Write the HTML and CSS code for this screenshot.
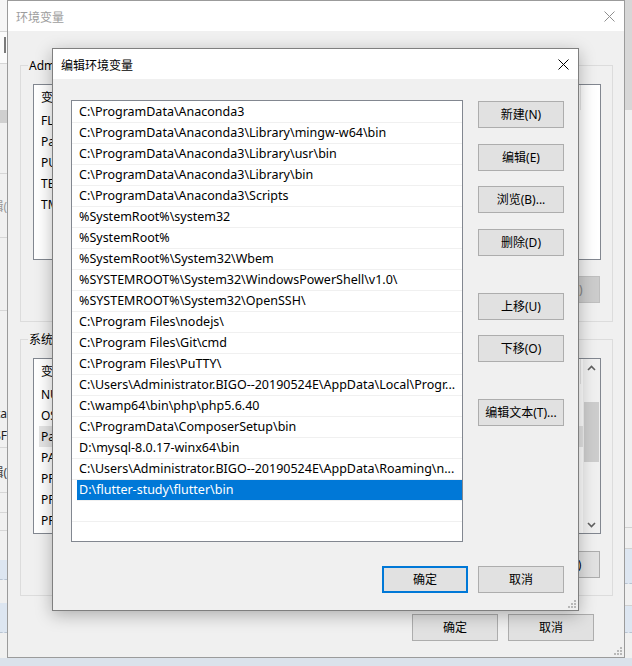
FILE: index.html
```html
<!DOCTYPE html>
<html lang="zh-CN">
<head>
<meta charset="utf-8">
<title>编辑环境变量</title>
<link rel="stylesheet" href="styles.css">
</head>
<body>
<div class="desktop">
  <div class="backapp">
    <div class="edge edge-left">
      <div class="bl la"></div>
      <div class="bl lb"><span class="caret"></span></div>
      <div class="bl lc"></div>
      <div class="bl ld"></div>
      <div class="bl le"></div>
      <div class="bl lt lf"><span>编辑(</span></div>
      <div class="bl lg"></div>
      <div class="bl lt lh"><span>Data</span></div>
      <div class="bl lt li"><span>GSF</span></div>
      <div class="bl lt lj"><span>编辑(</span></div>
      <div class="bl lk"></div>
      <div class="bl ll"></div>
      <div class="bl lm"></div>
      <div class="bl lsel"></div>
      <div class="bl ln"></div>
      <div class="bl lsel lsel2"></div>
      <div class="bl lrest"></div>
    </div>
    <div class="backapp-mid"></div>
    <div class="edge edge-right">
      <div class="bl ra"></div>
      <div class="bl rb"></div>
      <div class="bl rc"></div>
      <div class="bl rsel"></div>
      <div class="bl rd"></div>
      <div class="bl rsel rsel2"></div>
      <div class="bl lrest"></div>
    </div>
    <div class="edge-bottom"></div>
  </div>

  <section class="win envwin">
    <header class="titlebar">
      <span class="title title-inactive">环境变量</span>
      <svg class="xbtn" width="11" height="11" viewBox="0 0 11 11"><path d="M0.5 0.5L10.5 10.5M10.5 0.5L0.5 10.5" stroke="#8f8f8f" stroke-width="1" fill="none"/></svg>
    </header>
    <div class="winbody">
      <div class="group">
        <span class="group-label">Administrator 的用户变量(U)</span>
        <div class="lv">
          <div class="lv-main">
            <div class="lv-head"><span class="col1">变量</span><span class="col2">值</span></div>
            <div class="lv-row"><span class="col1">FLUTTER_STORAGE_BASE_URL</span></div>
            <div class="lv-row"><span class="col1">Path</span></div>
            <div class="lv-row"><span class="col1">PUB_HOSTED_URL</span></div>
            <div class="lv-row"><span class="col1">TEMP</span></div>
            <div class="lv-row"><span class="col1">TMP</span></div>
          </div>
        </div>
        <div class="btnrow">
          <button class="btn">新建(N)...</button>
          <button class="btn" disabled>编辑(E)...</button>
          <button class="btn" disabled>删除(D)</button>
        </div>
      </div>

      <div class="group group-sys">
        <span class="group-label">系统变量(S)</span>
        <div class="lv">
          <div class="lv-main">
            <div class="lv-head"><span class="col1">变量</span><span class="col2">值</span></div>
            <div class="lv-row"><span class="col1">NUMBER_OF_PROCESSORS</span></div>
            <div class="lv-row"><span class="col1">OS</span></div>
            <div class="lv-row lv-row-sel"><span class="col1">Path</span></div>
            <div class="lv-row"><span class="col1">PATHEXT</span></div>
            <div class="lv-row"><span class="col1">PROCESSOR_ARCHITECTURE</span></div>
            <div class="lv-row"><span class="col1">PROCESSOR_IDENTIFIER</span></div>
            <div class="lv-row"><span class="col1">PROCESSOR_LEVEL</span></div>
          </div>
          <div class="vscroll">
            <div class="sb-btn"><svg width="9" height="6" viewBox="0 0 9 6"><path d="M1 5L4.5 1.5L8 5" stroke="#606060" stroke-width="1.6" fill="none"/></svg></div>
            <div class="sb-track"><div class="sb-thumb"></div></div>
            <div class="sb-btn"><svg width="9" height="6" viewBox="0 0 9 6"><path d="M1 1L4.5 4.5L8 1" stroke="#606060" stroke-width="1.6" fill="none"/></svg></div>
          </div>
        </div>
        <div class="btnrow">
          <button class="btn">新建(W)...</button>
          <button class="btn">编辑(I)...</button>
          <button class="btn">删除(L)</button>
        </div>
      </div>

      <div class="btnrow mainrow">
        <button class="btn">确定</button>
        <button class="btn">取消</button>
      </div>
    </div>
    <svg class="grip" width="8" height="8" viewBox="0 0 8 8"><g fill="#b8b8b8"><rect x="6" y="0" width="2" height="2"/><rect x="3" y="3" width="2" height="2"/><rect x="6" y="3" width="2" height="2"/><rect x="0" y="6" width="2" height="2"/><rect x="3" y="6" width="2" height="2"/><rect x="6" y="6" width="2" height="2"/></g></svg>
  </section>

  <section class="win dialog">
    <header class="titlebar">
      <span class="title">编辑环境变量</span>
      <svg class="xbtn" width="11" height="11" viewBox="0 0 11 11"><path d="M0.5 0.5L10.5 10.5M10.5 0.5L0.5 10.5" stroke="#000" stroke-width="1" fill="none"/></svg>
    </header>
    <div class="dlgbody">
      <div class="dlg-main">
        <div class="pathlist">
          <div class="pl-row">C:\ProgramData\Anaconda3</div>
          <div class="pl-row">C:\ProgramData\Anaconda3\Library\mingw-w64\bin</div>
          <div class="pl-row">C:\ProgramData\Anaconda3\Library\usr\bin</div>
          <div class="pl-row">C:\ProgramData\Anaconda3\Library\bin</div>
          <div class="pl-row">C:\ProgramData\Anaconda3\Scripts</div>
          <div class="pl-row">%SystemRoot%\system32</div>
          <div class="pl-row">%SystemRoot%</div>
          <div class="pl-row">%SystemRoot%\System32\Wbem</div>
          <div class="pl-row">%SYSTEMROOT%\System32\WindowsPowerShell\v1.0\</div>
          <div class="pl-row">%SYSTEMROOT%\System32\OpenSSH\</div>
          <div class="pl-row">C:\Program Files\nodejs\</div>
          <div class="pl-row">C:\Program Files\Git\cmd</div>
          <div class="pl-row">C:\Program Files\PuTTY\</div>
          <div class="pl-row">C:\Users\Administrator.BIGO--20190524E\AppData\Local\Progr...</div>
          <div class="pl-row">C:\wamp64\bin\php\php5.6.40</div>
          <div class="pl-row">C:\ProgramData\ComposerSetup\bin</div>
          <div class="pl-row">D:\mysql-8.0.17-winx64\bin</div>
          <div class="pl-row">C:\Users\Administrator.BIGO--20190524E\AppData\Roaming\n...</div>
          <div class="pl-row pl-sel">D:\flutter-study\flutter\bin</div>
          <div class="pl-row"></div>
          <div class="pl-row"></div>
        </div>
        <div class="btncol">
          <button class="btn">新建(N)</button>
          <button class="btn mt16">编辑(E)</button>
          <button class="btn mt15">浏览(B)...</button>
          <button class="btn mt16">删除(D)</button>
          <button class="btn mt37">上移(U)</button>
          <button class="btn mt15">下移(O)</button>
          <button class="btn mt37">编辑文本(T)...</button>
        </div>
      </div>
      <div class="dlg-foot">
        <button class="btn btn-default">确定</button>
        <button class="btn">取消</button>
      </div>
    </div>
    <svg class="grip" width="8" height="8" viewBox="0 0 8 8"><g fill="#b8b8b8"><rect x="6" y="0" width="2" height="2"/><rect x="3" y="3" width="2" height="2"/><rect x="6" y="3" width="2" height="2"/><rect x="0" y="6" width="2" height="2"/><rect x="3" y="6" width="2" height="2"/><rect x="6" y="6" width="2" height="2"/></g></svg>
  </section>
</div>
</body>
</html>
```

FILE: styles.css
```css
* { box-sizing: border-box; }
html, body { margin: 0; padding: 0; }
body {
  width: 632px;
  height: 666px;
  overflow: hidden;
  background: #f0f0f0;
  font-family: "Noto Sans", "Noto Sans CJK SC", sans-serif;
  font-size: 12px;
  color: #000;
}
.desktop {
  position: relative;
  width: 632px;
  height: 666px;
  overflow: hidden;
}

/* ---------- window behind everything ---------- */
.backapp {
  display: grid;
  grid-template-columns: 7px 618px 7px;
  grid-template-rows: 658px 8px;
  width: 632px;
  height: 666px;
  background: #f0f0f0;
}
.edge { display: flex; flex-direction: column; overflow: hidden; }
.edge-bottom { grid-column: 1 / 4; background: #dbe2eb; }
.bl { flex: none; }
.lt { display: flex; justify-content: flex-end; overflow: hidden; white-space: nowrap; color: #6d6d6d; font-size: 12px; }
.la { height: 32px; background: #f6f6f6; border-bottom: 1px solid #d6d6d6; }
.lb { height: 32px; background: #fbfbfb; border-bottom: 1px solid #d6d6d6; padding: 5px 0 0 4px; }
.caret { display: block; width: 2px; height: 16px; background: #7a7a7a; }
.lc { height: 46px; }
.ld { height: 13px; background: #cfcfcf; }
.le { height: 51px; border-bottom: 1px solid #d6d6d6; }
.lf { height: 64px; padding-top: 24px; line-height: 17px; border-bottom: 1px solid #d6d6d6; color: #9a9a9a; }
.lg { height: 73px; border-bottom: 1px solid #d6d6d6; }
.lh { height: 113px; padding-top: 94px; line-height: 17px; color: #222; }
.li { height: 24px; line-height: 23px; border-bottom: 1px solid #d6d6d6; color: #222; }
.lj { height: 45px; padding-top: 16px; line-height: 17px; border-bottom: 1px solid #d6d6d6; color: #444; }
.lk { height: 20px; border-bottom: 1px solid #d6d6d6; }
.ll { height: 18px; border-bottom: 1px solid #d6d6d6; }
.lm { height: 29px; }
.lsel { height: 20px; background: #dde6f1; border-bottom: 1px dashed #b9c4d2; }
.ln { height: 23px; }
.lsel2 { height: 30px; }
.lrest { flex: 1; }
.ra { height: 110px; background: #d7d7d7; }
.rb { height: 418px; border-bottom: 1px solid #d2d2d2; }
.rc { height: 21px; border-bottom: 1px solid #d2d2d2; }
.rsel { height: 35px; background: #dde6f1; border-bottom: 1px dashed #b9c4d2; }
.rd { height: 22px; border-bottom: 1px solid #d2d2d2; }
.rsel2 { height: 27px; }

/* ---------- generic window chrome ---------- */
.win {
  position: absolute;
  display: flex;
  flex-direction: column;
  background: #f0f0f0;
}
.titlebar {
  flex: none;
  height: 30px;
  background: #fff;
  display: flex;
  align-items: center;
  justify-content: space-between;
  padding: 0 9px 0 8px;
}
.title { font-size: 12px; line-height: 17px; font-family: "Noto Sans CJK SC", sans-serif; }
.title-inactive { color: #9d9d9d; }
.xbtn { display: block; }
.grip { position: absolute; right: 2px; bottom: 2px; }

.btn {
  flex: none;
  width: 86px;
  height: 27px;
  margin: 0;
  padding: 0;
  border: 1px solid #adadad;
  background: #e1e1e1;
  color: #000;
  font-family: "Noto Sans", "Noto Sans CJK SC", sans-serif;
  font-size: 12px;
  line-height: 17px;
  white-space: nowrap;
}
.btn:disabled { background: #cccccc; border-color: #bfbfbf; color: #838383; }
.btn-default { border: 2px solid #0078d7; }

/* ---------- 环境变量 (background window) ---------- */
.envwin {
  left: 7px;
  top: 0;
  width: 618px;
  height: 658px;
  border: 1px solid #9b9b9b;
}
.winbody { flex: 1; padding: 34px 11px 0 12px; }
.group {
  position: relative;
  border: 1px solid #dcdcdc;
  padding: 18px 11px 17px 12px;
}
.group + .group { margin-top: 17px; }
.group:first-child { padding-bottom: 18px; }
.group-label {
  position: absolute;
  left: 7px;
  top: -9px;
  padding: 0 1px;
  background: #f0f0f0;
  line-height: 17px;
  white-space: nowrap;
}
.lv {
  display: flex;
  height: 176px;
  border: 1px solid #828790;
  background: #fff;
  overflow: hidden;
}
.lv-main { flex: 1; min-width: 0; overflow: hidden; }
.lv-head { display: flex; height: 25px; line-height: 25px; white-space: nowrap; }
.lv-head .col1 { border-right: 1px solid #e5e5e5; }
.col1 { flex: none; width: 547px; padding-left: 7px; white-space: nowrap; overflow: hidden; }
.col2 { flex: none; padding-left: 60px; }
.lv-row { height: 21px; line-height: 21px; display: flex; }
.lv-row-sel { margin-left: 5px; background: #e5e5e5; }
.lv-row-sel .col1 { padding-left: 2px; width: 542px; }
.vscroll {
  flex: none;
  width: 17px;
  display: flex;
  flex-direction: column;
  background: #f0f0f0;
}
.sb-btn { height: 17px; display: flex; align-items: center; justify-content: center; }
.sb-track { flex: 1; padding-top: 26px; }
.sb-thumb { width: 15px; height: 60px; margin-left: 1px; background: #cdcdcd; }
.btnrow { display: flex; justify-content: flex-end; gap: 10px; margin-top: 16px; padding-right: 1px; }
.group-sys .btnrow { margin-top: 17px; }
.btnrow .btn { width: 75px; }
.mainrow { margin-top: 18px; padding-right: 19px; }
.mainrow .btn { width: 86px; }

/* ---------- 编辑环境变量 (dialog) ---------- */
.dialog {
  left: 52px;
  top: 48px;
  width: 527px;
  height: 563px;
  border: 1px solid #7f7f7f;
  box-shadow: 0 4px 16px rgba(0, 0, 0, 0.28);
}
.dlgbody { flex: 1; padding: 21px 13px 17px 18px; display: flex; flex-direction: column; }
.dlg-main { display: flex; gap: 15px; }
.pathlist {
  flex: none;
  width: 392px;
  height: 442px;
  border: 1px solid #828790;
  background: #fff;
  padding-top: 1px;
  overflow: hidden;
}
.pl-row {
  height: 21px;
  line-height: 20px;
  padding-left: 7px;
  border-bottom: 1px solid #f0f0f0;
  white-space: nowrap;
  overflow: hidden;
  font-size: 12.5px;
}
.pl-sel { margin-left: 5px; padding-left: 2px; background: #0078d7; color: #fff; }
.btncol { display: flex; flex-direction: column; align-items: flex-start; padding-top: 1px; }
.mt15 { margin-top: 15px; }
.mt16 { margin-top: 16px; }
.mt37 { margin-top: 37px; }
.dlg-foot { display: flex; justify-content: flex-end; gap: 10px; margin-top: 24px; padding-right: 1px; }
```
